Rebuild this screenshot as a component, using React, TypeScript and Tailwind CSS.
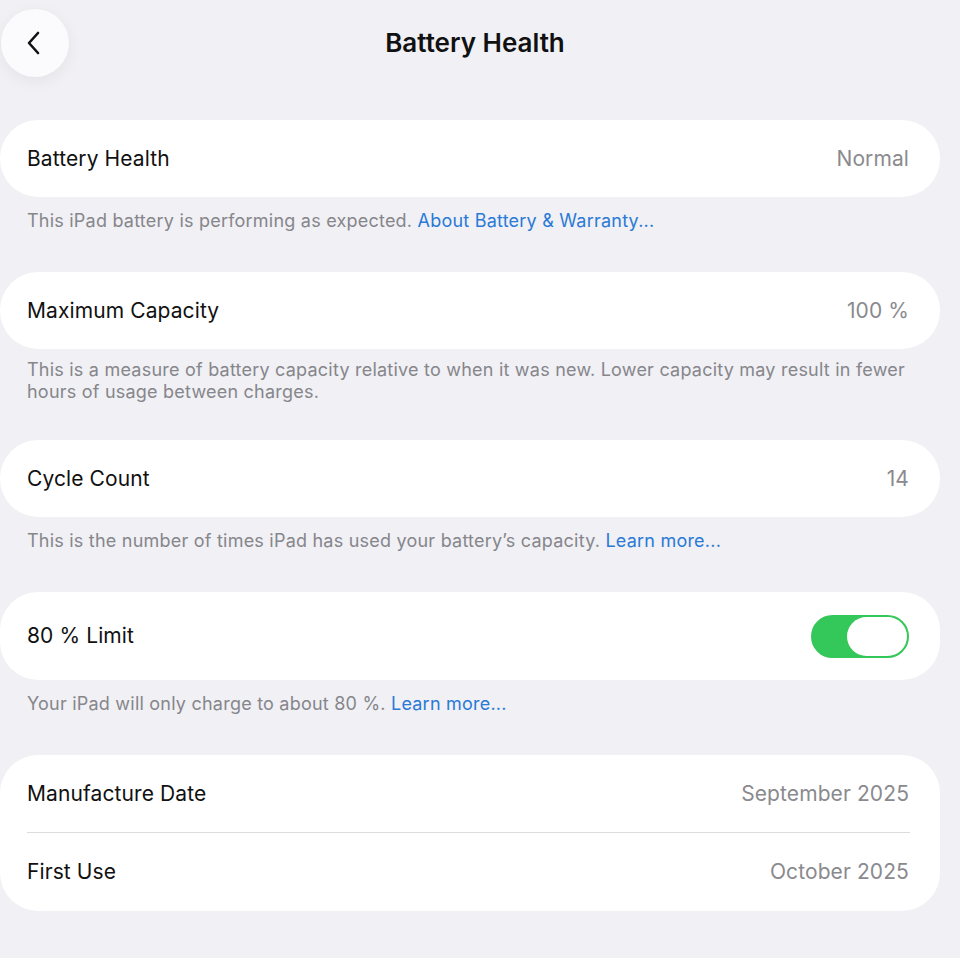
import type { ReactNode } from "react";

const font = { fontFamily: "Inter, 'Noto Sans', sans-serif" };

function Card({ children, className = "" }: { children: ReactNode; className?: string }) {
  return (
    <div className={`w-[940px] bg-white rounded-[38px] ${className}`}>{children}</div>
  );
}

function Row({ label, value, h = "h-[77px]" }: { label: string; value: ReactNode; h?: string }) {
  return (
    <div className={`flex items-center justify-between pl-[27px] pr-[31px] ${h}`}>
      <span className="text-[21px] tracking-[0.1px] text-[#111]">{label}</span>
      <span className="text-[21px] tracking-[0.1px] text-[#8a8a8e]">{value}</span>
    </div>
  );
}

function Footer({ children, pt = "pt-[13px]", pb = "pb-[40px]" }: { children: ReactNode; pt?: string; pb?: string }) {
  return (
    <p className={`pl-[27px] pr-[30px] ${pt} ${pb} text-[18px] tracking-[0.22px] leading-[22px] text-[#86868b]`}>
      {children}
    </p>
  );
}

const Link = ({ children }: { children: ReactNode }) => (
  <span className="text-[#2a7ad6]">{children}</span>
);

export default function App() {
  return (
    <div className="min-h-screen bg-[#f0f0f5]" style={font}>
      {/* header */}
      <div className="relative h-[120px]">
        <button className="absolute left-[1px] top-[9px] w-[68px] h-[68px] rounded-full bg-[#fbfbfd] shadow-[0_4px_16px_rgba(0,0,0,0.06)] flex items-center justify-center">
          <svg width="20" height="26" viewBox="0 0 20 26" fill="none">
            <path d="M13 3 L4 13 L13 23" stroke="#111" strokeWidth="2.6" strokeLinecap="round" strokeLinejoin="round" />
          </svg>
        </button>
        <h1 className="absolute left-0 right-[10px] top-[27px] text-center text-[26px] font-semibold text-[#111] leading-[32px]">
          Battery Health
        </h1>
      </div>

      <Card>
        <Row label="Battery Health" value="Normal" />
      </Card>
      <Footer>
        This iPad battery is performing as expected. <Link>About Battery &amp; Warranty...</Link>
      </Footer>

      <Card>
        <Row label="Maximum Capacity" value="100 %" />
      </Card>
      <Footer pt="pt-[10px]" pb="pb-[37px]">
        This is a measure of battery capacity relative to when it was new. Lower capacity may result in fewer hours of usage between charges.
      </Footer>

      <Card>
        <Row label="Cycle Count" value="14" />
      </Card>
      <Footer>
        This is the number of times iPad has used your battery’s capacity. <Link>Learn more...</Link>
      </Footer>

      <Card>
        <Row
          label="80 % Limit"
          h="h-[88px]"
          value={
            <span className="flex items-center w-[98px] h-[43px] rounded-full bg-[#34c759] border-[2px] border-[#34c759]">
              <span className="ml-auto w-[60px] h-[39px] rounded-full bg-white" />
            </span>
          }
        />
      </Card>
      <Footer>
        Your iPad will only charge to about 80 %. <Link>Learn more...</Link>
      </Footer>

      <Card className="pt-[1px]">
        <Row label="Manufacture Date" value="September 2025" h="h-[76px]" />
        <div className="ml-[27px] mr-[30px] h-[1px] bg-[#dcdce0]" />
        <Row label="First Use" value="October 2025" h="h-[78px]" />
      </Card>
    </div>
  );
}
